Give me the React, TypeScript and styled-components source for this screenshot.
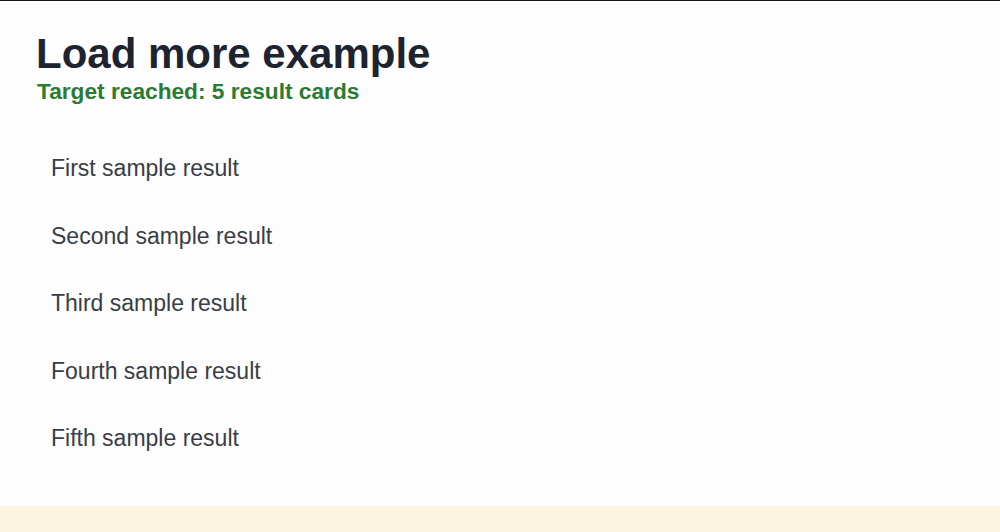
import React from "react";
import styled, { createGlobalStyle } from "styled-components";

const results = [
  "First sample result",
  "Second sample result",
  "Third sample result",
  "Fourth sample result",
  "Fifth sample result",
];

const App = () => {
  return (
    <>
      <GlobalStyle />
      <Page>
        <Main>
          <Title>Load more example</Title>
          <Status>Target reached: {results.length} result cards</Status>
          <ResultList>
            {results.map((r) => (
              <ResultCard key={r}>{r}</ResultCard>
            ))}
          </ResultList>
        </Main>
        <Footer />
      </Page>
    </>
  );
};

export default App;

const GlobalStyle = createGlobalStyle`
  html, body {
    margin: 0;
    padding: 0;
    background: #fdfdfd;
    font-family: "Liberation Sans", Arial, sans-serif;
  }
`;

const Page = styled.div`
  display: flex;
  flex-direction: column;
  height: 532px;
  border-top: 1px solid #141414;
  box-sizing: border-box;
`;

const Main = styled.main`
  flex: 0 0 505px;
  background: #fdfdfd;
  padding: 31.5px 0 0 36px;
  box-sizing: border-box;
`;

const Title = styled.h1`
  margin: 0;
  font-size: 42px;
  line-height: 42px;
  font-weight: 700;
  color: #1e2330;
`;

const Status = styled.div`
  margin: 5px 0 0 1px;
  font-size: 22.7px;
  line-height: 22px;
  font-weight: 700;
  color: #2c7a34;
`;

const ResultList = styled.ul`
  list-style: none;
  margin: 33px 0 0;
  padding: 0;
`;

const ResultCard = styled.li`
  padding: 22.75px 0 22.75px 15px;
  font-size: 23px;
  line-height: 22px;
  color: #383d48;
`;

const Footer = styled.footer`
  flex: 1;
  background: #fdf3e1;
`;
